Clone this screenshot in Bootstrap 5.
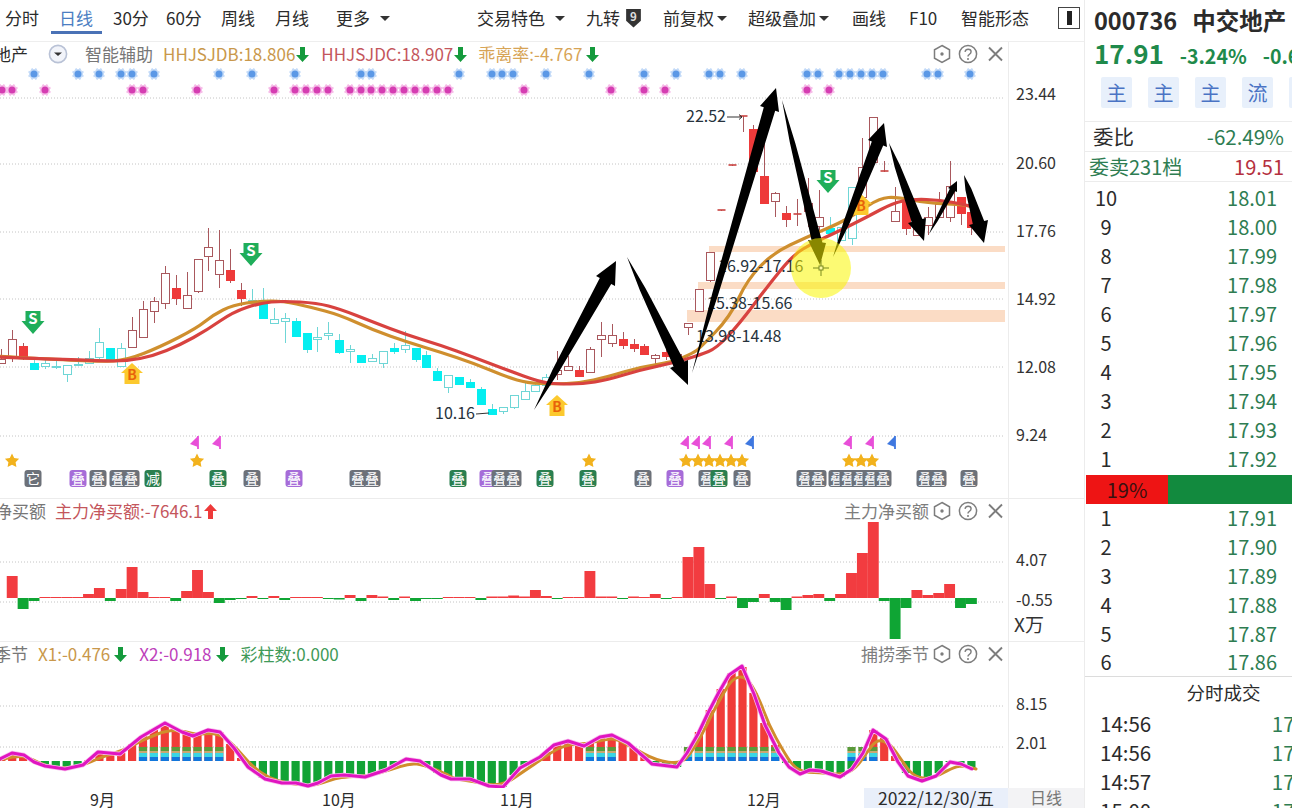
<!DOCTYPE html>
<html lang="zh-CN">
<head>
    <meta charset="UTF-8">
    <title>000736 中交地产</title>
    <link href="https://cdn.jsdelivr.net/npm/bootstrap@5.3.0/dist/css/bootstrap.min.css" rel="stylesheet">
    <style>
        html, body { height: 100%; overflow: hidden; background: #fff; }
        body { font-family: "Noto Sans CJK SC", "Noto Sans", sans-serif; color: #2b2b2b; }
        .app-wrap { width: 1292px; height: 808px; overflow: hidden; }
        .chart-col { width: 1085px; flex: none; border-right: 1px solid #ececec; }
        .side-col { width: 207px; flex: none; overflow: hidden; }

        .tool-bar { display: grid; height: 42px; padding-left: 5px; font-size: 17px; align-items: center; white-space: nowrap;
            grid-template-columns: 46px 62px 53px 55px 54px 61px 141px 109px 77px 85px 104px 57px 52px 97px 1fr;
            border-bottom: 1px solid #eeeeee; }
        .tool-item { display: flex; align-items: center; height: 100%; padding-bottom: 5px; }
        .tool-on { color: #4b7ec2; padding-left: 8px; position: relative; }
        .tool-on::after { content: ""; position: absolute; left: 0; width: 51px; bottom: 7px; height: 3px; background: #4a72b6; }
        .tri { display: inline-block; border: 5px solid transparent; border-top: 5px solid #333; border-bottom: 0; margin-left: 10px; }
        .tri-near { margin-left: 3px; }
        .nine-tag { width: 17px; height: 20px; margin-left: 5px; }
        .box-icon { width: 22px; height: 22px; border: 1px solid #444; display: flex; justify-content: center; align-items: center; }
        .box-icon i { display: block; width: 5px; height: 14px; background: #222; }

        .pane { position: relative; overflow: hidden; }
        .pane svg.plot { display: block; }
        .pane-main { height: 456px; }
        .pane-net { height: 143px; border-top: 1px solid #ececec; }
        .pane-sea { height: 147px; border-top: 1px solid #ececec; }
        .legend { position: absolute; left: 0; right: 78px; top: 0; height: 24px; display: flex; align-items: center; font-size: 17px; white-space: nowrap; }
        .legend-end { margin-left: auto; display: flex; align-items: center; color: #7d7d7d; }
        .pane-tools { width: 70px; height: 20px; margin-left: 4px; margin-right: 3px; }
        .c-grey { color: #777; }
        .c-gold { color: #c9984b; }
        .c-rust { color: #c4565c; }
        .c-amber { color: #d7a456; }
        .c-plum { color: #bd3fbb; }
        .c-leaf { color: #3f9a58; }
        .trim-a { margin-left: -6px; }
        .trim-b { margin-left: -5px; }
        .trim-c { margin-left: -6px; }
        .udlr { width: 13px; height: 15px; margin-left: 1px; }
        .udlr-far { margin-left: 4px; }
        .gap-round { margin-left: 20px; margin-right: 17px; }
        .gap-10 { margin-left: 10px; }
        .gap-11 { margin-left: 11px; }
        .gap-12 { margin-left: 12px; }
        .gap-9 { margin-left: 9px; }

        .axis-row { height: 20px; display: flex; font-size: 16px; position: relative; }
        .axis-months { width: 864px; position: relative; }
        .month-tag { position: absolute; top: -1px; }
        .m9 { left: 90px; } .m10 { left: 322px; } .m11 { left: 500px; } .m12 { left: 747px; }
        .date-tag { width: 144px; background: #e9effa; text-align: center; font-size: 17.500px; line-height: 19px; }
        .kind-tag { flex: 1; background: #f3f3f5; color: #777; text-align: center; line-height: 19px; }

        .side-title { padding: 4px 0 0 9px; font-size: 23.500px; font-weight: 700; height: 38px; line-height: 32px; white-space: nowrap; }
        .side-title span { margin-left: 15px; }
        .side-quote { padding-left: 9px; height: 32px; color: #1f8a4b; font-weight: 700; white-space: nowrap; line-height: 30px; display: flex; align-items: baseline; }
        .big-num { font-size: 26px; }
        .mid-num { font-size: 19.500px; margin-left: 16px; }
        .flag-row { display: flex; gap: 16px; padding: 7px 0 0 16px; height: 51px; width: 260px; }
        .flag-btn { width: 31px; height: 31px; flex: none; background: #e8f0fb; color: #4a73c4; font-size: 20px; line-height: 31px; text-align: center; border-radius: 2px; }
        .stat-row { height: 30px; border-top: 1px solid #ececec; display: flex; justify-content: space-between; align-items: center; padding-right: 8px; white-space: nowrap; }
        .stat-a { padding-left: 8px; font-size: 20.500px; }
        .stat-b { padding-left: 4px; font-size: 20px; }
        .green-t { color: #2e7d52; }
        .red-t { color: #b53040; }
        .book-list { border-top: 1px solid #ececec; padding-top: 1px; }
        .book-row { height: 29px; display: flex; justify-content: space-between; align-items: center; font-size: 20px; padding-right: 15px; }
        .book-no { width: 42px; text-align: center; }
        .ratio-bar { height: 29px; margin: 2px 0 0 1px; background: #128a3e; display: flex; }
        .ratio-red { width: 82px; background: #ee1414; text-align: center; font-size: 20px; line-height: 29px; color: #3a1010; }
        .sell-list { height: 172px; overflow: hidden; }
        .sell-list .book-row { height: 28.800px; }
        .deal-head { border-top: 1px solid #dcdcdc; text-align: center; font-size: 18.500px; height: 33px; line-height: 31px; padding-left: 70px; }
        .deal-row { height: 29px; display: flex; justify-content: space-between; align-items: center; font-size: 20.500px; padding-left: 15px; width: 238px; }
    </style>
</head>
<body>
    <div class="app-wrap d-flex">
        <div class="chart-col">
            <div class="tool-bar">
                <div class="tool-item">分时</div>
                <div class="tool-item tool-on">日线</div>
                <div class="tool-item">30分</div>
                <div class="tool-item">60分</div>
                <div class="tool-item">周线</div>
                <div class="tool-item">月线</div>
                <div class="tool-item">更多<i class="tri"></i></div>
                <div class="tool-item">交易特色<i class="tri"></i></div>
                <div class="tool-item">九转
                    <svg class="nine-tag" viewBox="0 0 16 19"><path d="M1 1h14v11l-7 6.500L1 12z" fill="#333"/><text x="8" y="12" font-size="11" font-weight="700" fill="#ddd" text-anchor="middle">9</text></svg>
                </div>
                <div class="tool-item">前复权<i class="tri tri-near"></i></div>
                <div class="tool-item">超级叠加<i class="tri tri-near"></i></div>
                <div class="tool-item">画线</div>
                <div class="tool-item">F10</div>
                <div class="tool-item">智能形态</div>
                <div class="tool-item"><span class="box-icon"><i></i></span></div>
            </div>

            <div class="pane pane-main">
                <svg class="plot" id="mainPlot" width="1084" height="456" viewBox="0 42 1084 456"></svg>
                <div class="legend">
                    <span class="trim-a">地产</span>
                    <svg width="20" height="20" viewBox="0 0 20 20" class="gap-round"><circle cx="10" cy="10" r="8.600" fill="#f2f4fa" stroke="#b9c2d6" stroke-width="1.600"/><path d="M6 8.500h8l-4 3.600z" fill="#333"/></svg>
                    <span class="c-grey">智能辅助</span>
                    <span class="c-gold gap-10">HHJSJDB:18.806</span>
                    <svg class="udlr" viewBox="0 0 13 15"><path d="M4 0h5v8h4l-6.500 7L0 8h4z" fill="#149a3c"/></svg>
                    <span class="c-rust gap-12">HHJSJDC:18.907</span>
                    <svg class="udlr" viewBox="0 0 13 15"><path d="M4 0h5v8h4l-6.500 7L0 8h4z" fill="#149a3c"/></svg>
                    <span class="c-amber gap-11">乖离率:-4.767</span>
                    <svg class="udlr udlr-far" viewBox="0 0 13 15"><path d="M4 0h5v8h4l-6.500 7L0 8h4z" fill="#149a3c"/></svg>
                    <div class="legend-end">
                        <svg class="pane-tools" viewBox="-2 0 70 20"><use href="#paneTools"/></svg>
                    </div>
                </div>
            </div>

            <div class="pane pane-net">
                <svg class="plot" id="netPlot" width="1084" height="142" viewBox="0 498 1084 142"></svg>
                <div class="legend">
                    <span class="c-grey trim-b">净买额</span>
                    <span class="c-rust gap-9">主力净买额:-7646.1</span>
                    <svg class="udlr" viewBox="0 0 13 15"><path d="M4 15h5V7h4L6.500 0 0 7h4z" fill="#ee3a3a"/></svg>
                    <div class="legend-end">
                        <span>主力净买额</span>
                        <svg class="pane-tools" viewBox="-2 0 70 20"><use href="#paneTools"/></svg>
                    </div>
                </div>
            </div>

            <div class="pane pane-sea">
                <svg class="plot" id="seaPlot" width="1084" height="146" viewBox="0 641 1084 146"></svg>
                <div class="legend">
                    <span class="c-grey trim-c">季节</span>
                    <span class="c-gold gap-10">X1:-0.476</span>
                    <svg class="udlr udlr-far" viewBox="0 0 13 15"><path d="M4 0h5v8h4l-6.500 7L0 8h4z" fill="#149a3c"/></svg>
                    <span class="c-plum gap-12">X2:-0.918</span>
                    <svg class="udlr udlr-far" viewBox="0 0 13 15"><path d="M4 0h5v8h4l-6.500 7L0 8h4z" fill="#149a3c"/></svg>
                    <span class="c-leaf gap-12">彩柱数:0.000</span>
                    <div class="legend-end">
                        <span>捕捞季节</span>
                        <svg class="pane-tools" viewBox="-2 0 70 20"><use href="#paneTools"/></svg>
                    </div>
                </div>
            </div>

            <div class="axis-row">
                <div class="axis-months">
                    <span class="month-tag m9">9月</span>
                    <span class="month-tag m10">10月</span>
                    <span class="month-tag m11">11月</span>
                    <span class="month-tag m12">12月</span>
                </div>
                <div class="date-tag">2022/12/30/五</div>
                <div class="kind-tag">日线</div>
            </div>
        </div>

        <div class="side-col">
            <div class="side-title">000736<span>中交地产</span></div>
            <div class="side-quote"><span class="big-num">17.91</span><span class="mid-num">-3.24%</span><span class="mid-num">-0.60</span></div>
            <div class="flag-row">
                <div class="flag-btn">主</div>
                <div class="flag-btn">主</div>
                <div class="flag-btn">主</div>
                <div class="flag-btn">流</div>
                <div class="flag-btn">主</div>
            </div>
            <div class="stat-row stat-a"><span>委比</span><span class="green-t">-62.49%</span></div>
            <div class="stat-row stat-b"><span class="green-t">委卖231档</span><span class="red-t">19.51</span></div>
            <div class="book-list" id="askList"></div>
            <div class="ratio-bar"><div class="ratio-red">19%</div></div>
            <div class="sell-list" id="bidList"></div>
            <div class="deal-head">分时成交</div>
            <div class="deal-row"><span>14:56</span><span class="green-t">17.91</span></div>
            <div class="deal-row"><span>14:56</span><span class="green-t">17.91</span></div>
            <div class="deal-row"><span>14:57</span><span class="green-t">17.91</span></div>
            <div class="deal-row"><span>15:00</span><span class="green-t">17.91</span></div>
        </div>
    </div>

    <svg width="0" height="0" class="position-absolute">
        <defs>
            <g id="paneTools" fill="none" stroke="#7d7d7d" stroke-width="1.500">
                <g transform="translate(-2 0)">
                    <path d="M9 1.500l7.500 4.300v8.400L9 18.500l-7.500-4.300V5.800z"/>
                    <circle cx="9" cy="10" r="1.700" fill="#7d7d7d" stroke="none"/>
                    <circle cx="35" cy="10" r="8.600"/>
                    <path d="M32 7.800c.4-1.700 1.600-2.500 3.100-2.500 1.700 0 3 1 3 2.500 0 1.500-1 2.100-2 2.800-.8.500-1.100 1-1.100 2" stroke-width="1.400"/>
                    <circle cx="35" cy="15" r="1" fill="#7d7d7d" stroke="none"/>
                </g>
                <path d="M54 3.500l13 13M67 3.500l-13 13" stroke-width="1.900"/>
            </g>
        </defs>
    </svg>

    <script src="https://cdn.jsdelivr.net/npm/bootstrap@5.3.0/dist/js/bootstrap.bundle.min.js"></script>
    <script>
        // order book rows
        const rowHtml = (n, p) => `<div class="book-row"><span class="book-no">${n}</span><span class="green-t">${p}</span></div>`;
        const asks = ['18.01','18.00','17.99','17.98','17.97','17.96','17.95','17.94','17.93','17.92'];
        document.getElementById('askList').innerHTML = asks.map((p, i) => rowHtml(10 - i, p)).join('');
        const bids = ['17.91','17.90','17.89','17.88','17.87','17.86'];
        document.getElementById('bidList').innerHTML = bids.map((p, i) => rowHtml(i + 1, p)).join('');

        const barX = i => 1.3 + 10.9 * i;

        // smooth path through points using quadratic midpoints
        function smooth(pts) {
            let d = `M${pts[0][0]} ${pts[0][1]}`;
            for (let i = 1; i < pts.length - 1; i++) {
                const mx = (pts[i][0] + pts[i + 1][0]) / 2, my = (pts[i][1] + pts[i + 1][1]) / 2;
                d += `Q${pts[i][0]} ${pts[i][1]} ${mx} ${my}`;
            }
            const last = pts[pts.length - 1];
            return d + `L${last[0]} ${last[1]}`;
        }
        const dotted = (y) => `<line x1="0" x2="1005" y1="${y}" y2="${y}" stroke="#c4c4c4" stroke-width="1" stroke-dasharray="1 2"/>`;
        const axisText = (x, y, t, size = 16) => `<text x="${x}" y="${y + 1}" font-size="${size}" fill="#333" dominant-baseline="middle">${t}</text>`;
        const vLine = `<line x1="1008.500" x2="1008.500" y1="0" y2="808" stroke="#ececec"/>`;

        // ---- main k-line pane ----
        // [bodyTop, bodyBottom, high, low, kind]  R hollow red, F solid red, c hollow cyan, C solid cyan, D dash
        const candles = [
            [359,363,349,363,'R'],[339,358,330,362,'R'],[346,358,343,360,'F'],[363,369,357,369,'C'],[363,366,358,369,'c'],
            [366,367,359,369,'c'],[365,374,365,382,'c'],[364,365,357,365,'c'],[358,363,351,363,'c'],[342,357,328,359,'c'],
            [348,359,348,359,'C'],[348,366,343,366,'c'],[330,347,317,347,'R'],[309,337,301,337,'R'],[301,311,297,323,'R'],
            [273,303,266,309,'R'],[288,298,275,305,'F'],[295,308,272,308,'R'],[259,291,259,293,'R'],[247,256,228,271,'R'],
            [260,274,230,288,'R'],[270,280,249,283,'F'],[290,298,283,306,'F'],[300,303,289,303,'c'],[300,318,288,318,'C'],
            [319,323,308,323,'c'],[318,321,313,343,'c'],[321,336,318,336,'C'],[333,349,333,353,'C'],[337,339,327,352,'c'],
            [333,335,322,340,'c'],[340,352,334,354,'C'],[349,351,345,363,'c'],[355,362,355,362,'C'],[358,361,354,361,'c'],
            [351,363,351,368,'c'],[348,351,343,354,'C'],[345,349,331,353,'c'],[348,359,348,362,'C'],[355,367,351,367,'C'],
            [371,380,368,380,'C'],[375,387,375,393,'c'],[377,384,377,384,'C'],[382,387,379,387,'C'],[389,404,387,404,'C'],
            [409,414,404,414,'C'],[407,411,407,414,'c'],[395,407,395,409,'c'],[391,399,383,399,'c'],[385,391,383,391,'c'],
            [377,385,374,385,'c'],[370,374,351,380,'R'],[366,370,356,370,'R'],[370,376,366,377,'F'],[349,372,347,373,'R'],
            [335,339,322,357,'R'],[335,343,324,347,'R'],[339,345,332,349,'F'],[344,348,339,352,'F'],[346,354,344,354,'F'],
            [355,358,354,365,'R'],[352,356,347,360,'F'],[354,365,354,365,'R'],[323,327,323,335,'R'],[289,311,289,311,'R'],
            [252,280,252,282,'R'],[210,211,210,211,'D'],[165,166,165,166,'D'],[116,117,116,132,'D'],[129,171,125,171,'F'],
            [176,203,133,203,'F'],[193,201,192,217,'R'],[213,219,206,227,'F'],[214,215,199,226,'D'],[203,211,178,227,'R'],
            [217,226,190,230,'R'],[228,233,217,233,'C'],[227,240,227,240,'c'],[187,238,187,245,'c'],[167,197,138,197,'R'],
            [117,162,117,162,'R'],[171,172,161,172,'D'],[211,221,187,221,'R'],[202,228,202,235,'F'],[218,235,218,235,'R'],
            [217,225,207,235,'R'],[204,217,192,217,'R'],[186,217,161,222,'R'],[197,213,197,225,'F'],[212,227,212,235,'F']
        ];
        function candleSvg(c, i) {
            const x = Math.round(barX(i)) + 0.5, k = c[4];
            const stroke = 'cC'.includes(k) ? '#6fd6d6' : '#a9585d';
            let s = `<line x1="${x}" x2="${x}" y1="${c[2]}" y2="${c[3]}" stroke="${stroke}"/>`;
            if (k === 'D') return s + `<line x1="${x - 4}" x2="${x + 4}" y1="${c[0]}" y2="${c[0]}" stroke="#c8423f" stroke-width="1.600"/>`;
            const fill = k === 'F' ? '#ee3a3a' : k === 'C' ? '#05eef0' : '#fff';
            const edge = k === 'F' ? '#ee3a3a' : k === 'C' ? '#05eef0' : stroke;
            return s + `<rect x="${x - 4}" y="${c[0] + 0.5}" width="8" height="${c[1] - c[0]}" fill="${fill}" stroke="${edge}"/>`;
        }
        const maRed = [[-5,357],[100,361],[127,361],[153,356],[180,345],[207,330],[233,312],[260,303],[283,301],[317,303],[340,309],[373,322],[407,335],[440,345],[473,357],[507,370],[540,382],[557,384],[583,384],[607,380],[640,370],[673,363],[700,355],[717,348],[740,323],[767,287],[793,255],[813,243],[837,232],[867,217],[893,203],[913,199],[940,200],[967,205],[975,208]];
        const maOrg = [[-5,356],[100,362],[127,360],[160,347],[197,328],[213,315],[233,305],[260,301],[283,301],[310,307],[340,315],[373,330],[407,342],[440,352],[473,363],[507,377],[527,383],[553,384],[580,383],[607,377],[640,367],[673,362],[693,353],[700,348],[730,317],[747,280],[773,253],[807,237],[840,223],[857,213],[880,198],[897,197],[927,203],[967,205],[975,208]];

        function flower(x, y, dark, light) {
            let rays = '';
            for (let a = 0; a < 8; a++) {
                const r = a * Math.PI / 4 + Math.PI / 8;
                rays += `<line x1="${x}" y1="${y}" x2="${(x + 6 * Math.cos(r)).toFixed(1)}" y2="${(y + 6 * Math.sin(r)).toFixed(1)}"/>`;
            }
            return `<circle cx="${x}" cy="${y}" r="5" fill="${light}"/><g stroke="${light}" stroke-width="2">${rays}</g><circle cx="${x}" cy="${y}" r="3.500" fill="${dark}"/>`;
        }
        const blueAt = [34,78,99,121,132,154,219,252,295,361,371,459,492,502,513,546,589,644,676,709,720,742,807,818,839,850,861,872,883,927,938,970];
        const pinkAt = [2,12,45,132,143,197,274,295,306,317,328,350,361,371,382,393,404,415,426,437,448,524,611,644,665,807,829];

        function star(cx, cy, r) {
            let p = [];
            for (let i = 0; i < 10; i++) {
                const a = -Math.PI / 2 + i * Math.PI / 5, q = i % 2 ? r * 0.5 : r;
                p.push(`${(cx + q * Math.cos(a)).toFixed(1)},${(cy + q * Math.sin(a)).toFixed(1)}`);
            }
            return `<polygon points="${p.join(' ')}" fill="#f2b21d"/>`;
        }
        const starAt = [12,197,589,686,698,709,720,731,742,849,861,872];

        const flag = (x, col) => `<path d="M${x + 3} 436v13" stroke="${col}" stroke-width="1.800"/><polygon points="${x + 3},436 ${x + 3},447 ${x - 5},444" fill="${col}"/>`;

        const G = '#6c7179', P = '#a66cd8', N = '#2a7f4f';
        const tags = [[33,G,'它'],[78,P],[98,G],[118,G],[131,G],[153,N,'减'],[218,N],[252,G],[294,P],[358,G],[372,G],[458,N],[488,P],[500,G],[513,G],[545,N],[588,N],[643,G],[675,P],[707,G],[719,N],[742,G],[805,G],[818,G],[837,G],[848,G],[860,G],[871,G],[883,G],[925,G],[938,G],[969,G]];
        const tagSvg = t => `<rect x="${t[0] - 8.500}" y="470" width="17" height="17" rx="3" fill="${t[1]}"/><text x="${t[0]}" y="483.500" font-size="14" fill="#fff" text-anchor="middle">${t[2] || '叠'}</text>`;

        function sellMark(x, y) {
            return `<path d="M${x - 7.500} ${y - 11}h15v10h4l-11.500 13 -11.500 -13h4z" fill="#1fae5a"/><text x="${x}" y="${y + 2}" font-size="15" font-weight="700" fill="#fff" text-anchor="middle">S</text>`;
        }
        function buyMark(x, y) {
            return `<path d="M${x} ${y - 11}l11 10h-3.500v11h-15v-11h-3.500z" fill="#fcc92e"/><text x="${x}" y="${y + 6}" font-size="14" font-weight="700" fill="#e8630a" text-anchor="middle">B</text>`;
        }
        const lerp = (a, b, t) => [a[0] + (b[0] - a[0]) * t, a[1] + (b[1] - a[1]) * t];
        // hand-drawn taper: the shaft widens fast near the tail, then slowly up to the head
        function arrow(s, t, c1, c2) {
            const p1 = lerp(c1, c2, 0.2), p2 = lerp(c1, c2, 0.8);
            const m1 = lerp(s, p1, 0.3), m2 = lerp(s, p2, 0.3);
            const mid = lerp(m1, m2, 0.5);
            const q1 = lerp(mid, m1, 1.7), q2 = lerp(mid, m2, 1.7);
            return `<polygon points="${[s, q1, p1, c1, t, c2, p2, q2].map(p => p.join(',')).join(' ')}" fill="#000"/>`;
        }

        let m = vLine;
        [98,164,232,299,367,436].forEach(y => m += dotted(y));
        m += '<rect x="709" y="246" width="296" height="6" fill="#fbdcc5"/><rect x="698" y="282" width="307" height="7" fill="#fbdcc5"/><rect x="687" y="310" width="318" height="12" fill="#fbdcc5"/>';
        m += candles.map(candleSvg).join('');
        m += `<path d="${smooth(maOrg)}" fill="none" stroke="#cf8f2e" stroke-width="3.200" stroke-linecap="round"/>`;
        m += `<path d="${smooth(maRed)}" fill="none" stroke="#d8423f" stroke-width="3.200" stroke-linecap="round"/>`;
        m += blueAt.map(x => flower(x, 74, '#5b98e6', '#c4dbf8')).join('');
        m += pinkAt.map(x => flower(x, 90, '#d53db2', '#f6bce8')).join('');
        m += starAt.map(x => star(x, 461, 7.500)).join('');
        [[195,'#e84fd8'],[217,'#e84fd8'],[685,'#e84fd8'],[696,'#e84fd8'],[707,'#e84fd8'],[729,'#e84fd8'],[750,'#3f78e0'],[848,'#e84fd8'],[870,'#e84fd8'],[892,'#3f78e0']].forEach(f => m += flag(f[0], f[1]));
        m += tags.map(tagSvg).join('');
        m += sellMark(33, 322) + sellMark(251, 254) + sellMark(828, 181);
        m += buyMark(132, 374) + buyMark(557, 406) + buyMark(861, 205);
        [['16.92-17.16',718,268],['15.38-15.66',707,305],['13.98-14.48',696,338]].forEach(z => m += `<text x="${z[1]}" y="${z[2]}" font-size="16" fill="#26323c" dominant-baseline="middle">${z[0]}</text>`);
        m += `<text x="686" y="118" font-size="16" fill="#26323c" dominant-baseline="middle">22.52</text><path d="M727 117h15M739 114.500l3 2.500-3 2.500" fill="none" stroke="#333"/>`;
        m += `<text x="435" y="415" font-size="16" fill="#26323c" dominant-baseline="middle">10.16</text><path d="M476 414l13-1" stroke="#333"/>`;
        m += arrow([534,410],[616,261],[596,276],[615,286]);
        m += arrow([627,257],[688,385],[670,368],[688,360]);
        m += arrow([692,373],[776,88],[760,106],[779,112]);
        m += arrow([782,100],[820,265],[808,240],[826,243]);
        m += arrow([833,257],[884,123],[868,140],[887,147]);
        m += arrow([889,143],[924,241],[908,223],[926,218]);
        m += arrow([929,234],[957,181],[948,188],[957,192]);
        m += arrow([964,175],[984,243],[969,225],[988,220]);
        m += '<circle cx="821" cy="268" r="30" fill="rgba(250,245,0,.55)"/><path d="M813 268h16M821 260v16" stroke="#7a8a20"/><rect x="819" y="266" width="4" height="4" fill="#fdf9a0" stroke="#7a8a20"/>';
        [[95,'23.44'],[164,'20.60'],[232,'17.76'],[300,'14.92'],[368,'12.08'],[436,'9.24']].forEach(a => m += axisText(1016, a[0], a[1]));
        document.getElementById('mainPlot').innerHTML = m;

        // ---- net buy pane ----
        const netVals = [0,22,-11,-3,.5,.5,.5,.5,4,10,-3,9,31,6,.5,.5,-3,7,28,6,-5,-2,-1,2,-.5,2,-2,.5,.5,.3,-.5,-1.500,3,-3,3,1.500,-2,1.500,-3,-.5,-.5,.3,.3,.3,-2,1.500,1.500,2.500,1.500,8,2,-.5,.5,.5,27,1.500,1.500,-.5,1.500,.5,4,-.5,.5,41,51,14,-.3,1.500,-10,-4,4,-4,-12,1.500,3,4,-3,4,25,45,76,-3,-41,-10,8,3,5,14,-10,-6];
        const base2 = 597;
        let n = vLine + dotted(561) + dotted(601);
        netVals.forEach((v, i) => {
            if (!v) return;
            const x = barX(i) - 5.450, h = Math.max(Math.abs(v), 1);
            n += `<rect x="${x}" y="${v > 0 ? base2 - h : base2}" width="10.900" height="${h}" fill="${v > 0 ? '#f23c40' : '#0fa534'}"/>`;
        });
        n += axisText(1016, 560, '4.07') + axisText(1016, 600, '-0.55') + axisText(1014, 625, 'X万', 19);
        document.getElementById('netPlot').innerHTML = n;

        // ---- season pane ----
        const x2 = [[0,758],[12,752],[24,754],[34,761],[45,765],[65,768],[83,764],[98,751],[120,753],[141,736],[165,722],[182,731],[193,735],[208,729],[220,731],[234,747],[248,766],[265,778],[282,782],[296,782],[308,785],[318,782],[331,775],[344,774],[365,776],[386,769],[406,758],[420,760],[441,774],[451,778],[470,778],[489,785],[503,786],[520,767],[540,756],[554,744],[568,740],[584,745],[600,736],[612,734],[628,742],[652,763],[677,766],[687,752],[698,733],[708,712],[719,691],[729,674],[742,665],[754,693],[765,724],[779,752],[789,766],[800,773],[810,769],[821,770],[840,776],[852,768],[863,752],[873,729],[886,738],[898,761],[908,775],[922,780],[936,775],[950,761],[961,763],[972,768]];
        const yAt = x => {
            for (let i = 1; i < x2.length; i++) {
                if (x <= x2[i][0]) {
                    const t = (x - x2[i - 1][0]) / (x2[i][0] - x2[i - 1][0]);
                    return x2[i - 1][1] + (x2[i][1] - x2[i - 1][1]) * t;
                }
            }
            return x2[x2.length - 1][1];
        };
        const base3 = 760;
        const hasBands = i => (i >= 13 && i <= 20) || (i >= 54 && i <= 56) || (i >= 63 && i <= 71) || (i >= 78 && i <= 80);
        let s = vLine + dotted(705) + dotted(746);
        for (let i = 0; i < 90; i++) {
            const x = barX(i) - 4.100, y = Math.round(yAt(barX(i)));
            if (y < base3) s += `<rect x="${x}" y="${y}" width="8.200" height="${base3 - y}" fill="#f03c38"/>`;
            else s += `<rect x="${x}" y="${base3}" width="8.200" height="${Math.max(y - base3, 1)}" fill="#12a334"/>`;
            if (hasBands(i)) {
                s += `<rect x="${x}" y="746" width="8.200" height="4" fill="#5a9a3a"/><rect x="${x}" y="750" width="8.200" height="2" fill="#c9a870"/><rect x="${x}" y="752" width="8.200" height="4" fill="#3ad6e4"/><rect x="${x}" y="756" width="8.200" height="4" fill="#1177dc"/>`;
            }
        }
        const x1 = x2.map((p, i) => [p[0] + 4, i > 0 && i < x2.length - 1 ? (p[1] * 2 + x2[i - 1][1] + x2[i + 1][1]) / 4 + 1 : p[1]]);
        s += `<path d="${smooth(x1)}" fill="none" stroke="#d08d2c" stroke-width="3" stroke-linecap="round"/>`;
        s += `<polyline points="${x2.map(p => p.join(',')).join(' ')}" fill="none" stroke="#f8bdee" stroke-width="4.500" stroke-linejoin="round"/>`;
        s += `<polyline points="${x2.map(p => p.join(',')).join(' ')}" fill="none" stroke="#e015c0" stroke-width="3" stroke-linejoin="round" stroke-linecap="round"/>`;
        s += axisText(1016, 704, '8.15') + axisText(1016, 743, '2.01');
        document.getElementById('seaPlot').innerHTML = s;
    </script>
</body>
</html>
